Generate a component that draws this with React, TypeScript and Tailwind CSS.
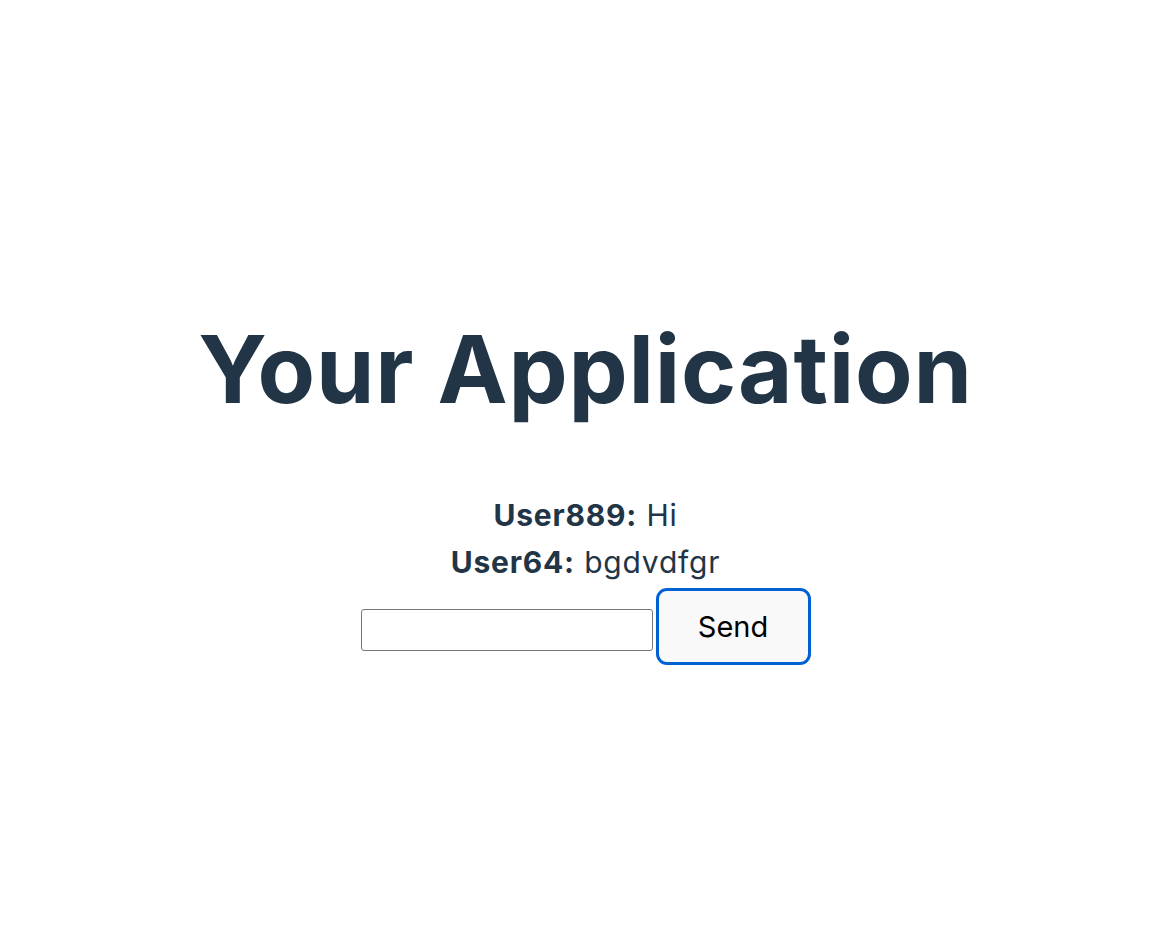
import { useState } from 'react';

type Message = { user: string; text: string };

export default function App() {
  const [messages] = useState<Message[]>([
    { user: 'User889', text: 'Hi' },
    { user: 'User64', text: 'bgdvdfgr' },
  ]);
  const [draft, setDraft] = useState('');

  return (
    <div
      className="min-h-screen bg-white text-[#213547] pt-[314px] pl-[11px]"
      style={{ fontFamily: 'Inter, "Noto Sans", sans-serif' }}
    >
      <div className="flex flex-col items-center">
        <h1 className="text-[94px] leading-[110px] font-bold tracking-[0.8px]">
          Your Application
        </h1>

        {/* Chat log */}
        <div className="mt-[68px] flex flex-col items-center text-[30px] leading-[47px] tracking-[0.8px]">
          {messages.map((m, i) => (
            <p key={i}>
              <strong className="font-bold">{m.user}:</strong> {m.text}
            </p>
          ))}
        </div>

        {/* Input row */}
        <div className="mt-[2px] flex items-start gap-[3px]">
          <input
            value={draft}
            onChange={(e) => setDraft(e.target.value)}
            className="mt-[21px] w-[292px] h-[42px] rounded-[3px] border border-[#767676] bg-white px-2 outline-none"
          />
          <button className="w-[155px] h-[77px] rounded-[11px] border-[3px] border-[#0061d5] bg-[#f9f9f9] text-black text-[29px]">
            Send
          </button>
        </div>
      </div>
    </div>
  );
}
